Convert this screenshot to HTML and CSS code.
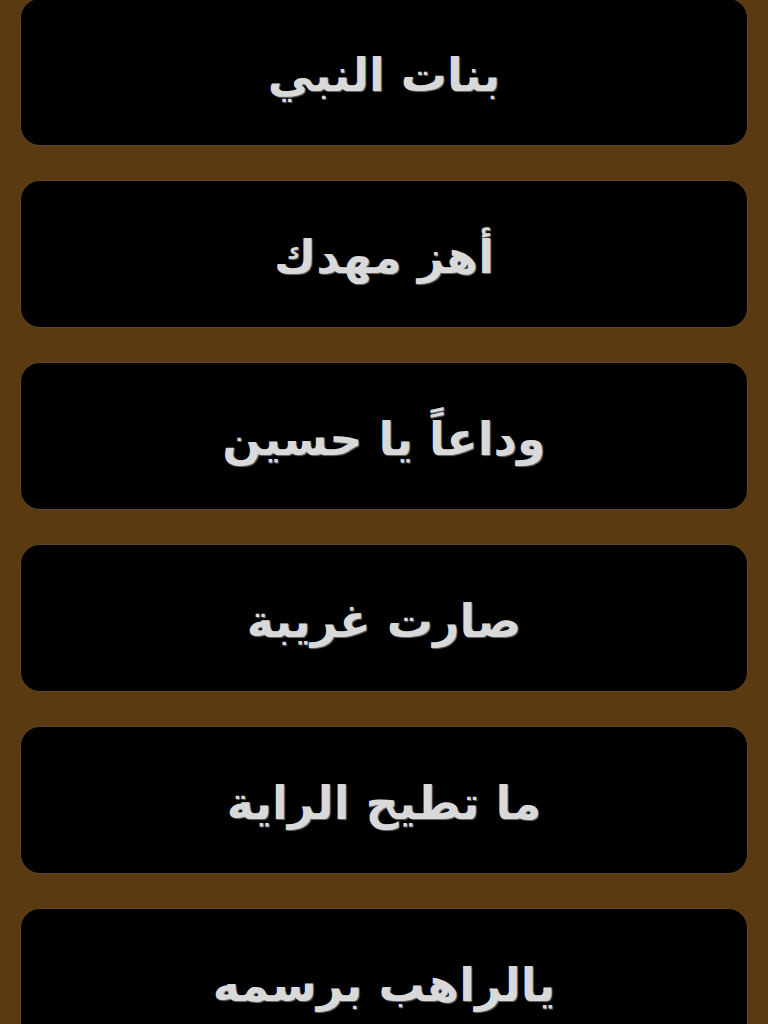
FILE: index.html
```html
<!DOCTYPE html>
<html lang="ar" dir="rtl">
<head>
<meta charset="utf-8">
<title>قائمة</title>
<link rel="stylesheet" href="styles.css">
</head>
<body>
<main class="list">
  <div class="card"><span class="title">بنات النبي</span></div>
  <div class="card"><span class="title">أهز مهدك</span></div>
  <div class="card"><span class="title">وداعاً يا حسين</span></div>
  <div class="card"><span class="title">صارت غريبة</span></div>
  <div class="card"><span class="title">ما تطيح الراية</span></div>
  <div class="card"><span class="title">يالراهب برسمه</span></div>
</main>
</body>
</html>
```
FILE: styles.css
```css
html, body {
  margin: 0;
  padding: 0;
  background: #5b3a11;
  height: 1024px;
  overflow: hidden;
}
.list {
  display: flex;
  flex-direction: column;
  gap: 34px;
  padding: 0 20px;
  margin-top: -2px;
}
.card {
  height: 148px;
  box-sizing: border-box;
  background: #000;
  border: 1px solid #5e4526;
  border-radius: 20px;
  display: flex;
  align-items: center;
  justify-content: center;
}
.title {
  font-family: "DejaVu Sans", sans-serif;
  font-weight: bold;
  font-size: 46px;
  color: #d9d9d9;
  text-shadow: 1px 1px 1px #6a6a6a;
  padding-top: 6px;
}
```
